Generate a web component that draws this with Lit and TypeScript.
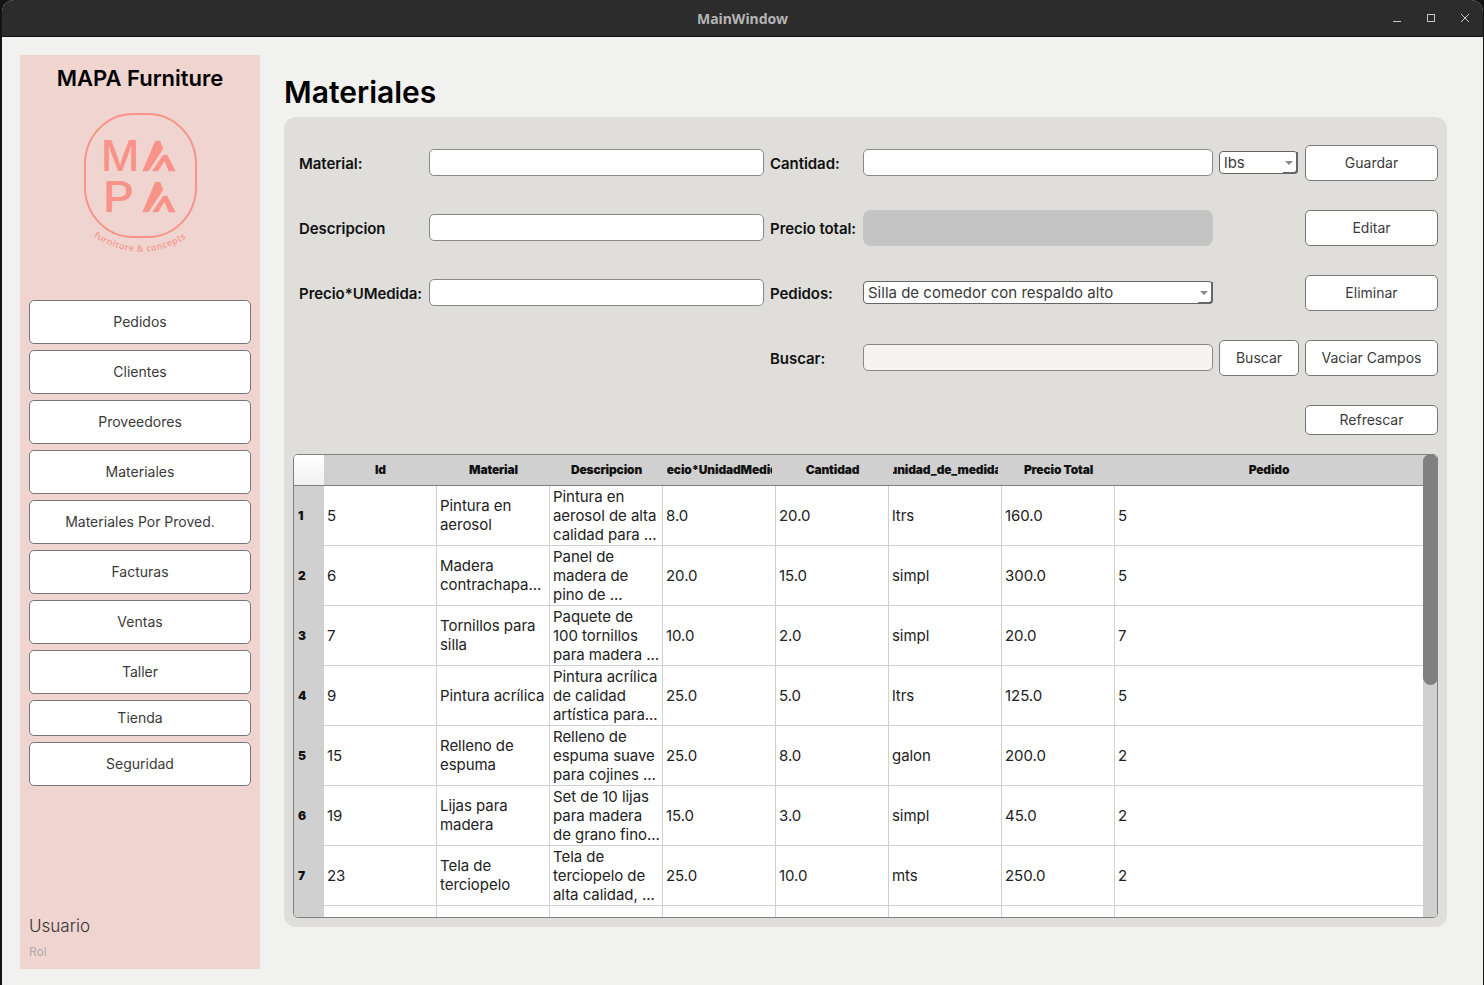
import { LitElement, html, css, svg } from 'lit';
import { customElement } from 'lit/decorators.js';

const NAV = [
  'Pedidos', 'Clientes', 'Proveedores', 'Materiales', 'Materiales Por Proved.',
  'Facturas', 'Ventas', 'Taller', 'Tienda', 'Seguridad',
];

const COLUMNS = [
  'Id', 'Material', 'Descripcion', 'Precio*UnidadMedida', 'Cantidad',
  'unidad_de_medida', 'Precio Total', 'Pedido',
];

// \n marks where the reference table wraps a cell
const ROWS = [
  ['5', 'Pintura en\naerosol', 'Pintura en\naerosol de alta\ncalidad para ...', '8.0', '20.0', 'ltrs', '160.0', '5'],
  ['6', 'Madera\ncontrachapa...', 'Panel de\nmadera de\npino de ...', '20.0', '15.0', 'simpl', '300.0', '5'],
  ['7', 'Tornillos para\nsilla', 'Paquete de\n100 tornillos\npara madera ...', '10.0', '2.0', 'simpl', '20.0', '7'],
  ['9', 'Pintura acrílica', 'Pintura acrílica\nde calidad\nartística para...', '25.0', '5.0', 'ltrs', '125.0', '5'],
  ['15', 'Relleno de\nespuma', 'Relleno de\nespuma suave\npara cojines ...', '25.0', '8.0', 'galon', '200.0', '2'],
  ['19', 'Lijas para\nmadera', 'Set de 10 lijas\npara madera\nde grano fino...', '15.0', '3.0', 'simpl', '45.0', '2'],
  ['23', 'Tela de\nterciopelo', 'Tela de\nterciopelo de\nalta calidad, ...', '25.0', '10.0', 'mts', '250.0', '2'],
  ['', '', '', '', '', '', '', ''],
];

const peak = svg`
  <polygon points="62.3,61.3 68.5,61.3 83.3,38.7 80,30.7 75.3,30.7"></polygon>
  <polygon points="72,61.3 78,61.3 84.5,51 88.7,61.3 95.7,61.3 87,44.5 83,45"></polygon>
`;

const logo = svg`
  <rect x="5" y="4" width="111" height="123" rx="48" ry="50" fill="none" stroke="#f9938a" stroke-width="2"></rect>
  <text x="21" y="61.3" class="mark">M</text>
  <text transform="translate(22.5 102.3) scale(1.18 1)" class="mark">P</text>
  <g fill="#f9938a">
    ${peak}
    <g transform="translate(0 41)">${peak}</g>
  </g>
  <path id="arc" d="M14 127 Q60 156 106 128" fill="none"></path>
  <text class="tag"><textPath href="#arc" startOffset="50%" text-anchor="middle">furniture &amp; concepts</textPath></text>
`;

@customElement('app-root')
export class AppRoot extends LitElement {
  static styles = css`
    :host {
      display: block;
      height: 985px;
      overflow: hidden;
      background: #141414;
      font-family: Inter, 'Liberation Sans', sans-serif;
      color: #111;
    }
    .window {
      height: 985px;
      margin: 0 1px 0 2px;
      display: flex;
      flex-direction: column;
      background: #f1f1ef;
      border-radius: 12px 12px 0 0;
      overflow: hidden;
    }
    .titlebar {
      height: 37px;
      flex: none;
      display: flex;
      align-items: center;
      justify-content: center;
      position: relative;
      background: #2c2c2c;
      border-bottom: 1px solid #111;
      box-sizing: border-box;
      color: #b4b4b4;
      font: 700 14px 'Noto Sans', sans-serif;
    }
    .controls {
      position: absolute;
      right: 13px;
      top: 13px;
      display: flex;
      gap: 24px;
    }
    .controls svg {
      display: block;
      width: 10px;
      height: 10px;
      fill: none;
      stroke: #c8c8c8;
      stroke-width: 1;
    }
    .content {
      flex: 1;
      display: flex;
      padding: 18px 36px 16px 18px;
      gap: 24px;
    }

    /* sidebar */
    .sidebar {
      width: 240px;
      flex: none;
      display: flex;
      flex-direction: column;
      background: #f0d4d0;
      box-sizing: border-box;
      padding: 10px 9px 9px;
    }
    .brand {
      text-align: center;
      font-size: 22px;
      font-weight: 600;
      line-height: 27px;
      color: #000;
    }
    .logo {
      display: block;
      width: 120px;
      height: 150px;
      margin: 18px auto 40px;
      overflow: visible;
    }
    .mark {
      font: 500 42px Inter, sans-serif;
      fill: #f9938a;
    }
    .tag {
      font: 600 9px 'Open Sans', sans-serif;
      letter-spacing: 0.45px;
      fill: #f49a91;
    }
    nav {
      display: flex;
      flex-direction: column;
      gap: 6px;
    }
    .btn {
      display: flex;
      align-items: center;
      justify-content: center;
      box-sizing: border-box;
      background: #fff;
      border: 1px solid #777;
      border-radius: 5px;
      color: #3a3a3a;
      font-size: 14px;
      white-space: nowrap;
    }
    nav .btn {
      height: 44px;
      padding-bottom: 2px;
    }
    nav .btn.short {
      height: 36px;
    }
    .user {
      margin-top: auto;
      font-size: 17px;
      font-weight: 300;
      line-height: 22px;
      color: #333;
    }
    .role {
      margin-top: 7px;
      margin-bottom: 1px;
      font-size: 12px;
      line-height: 15px;
      color: #b0aaa8;
    }

    /* main */
    main {
      flex: 1;
      min-width: 0;
      display: flex;
      flex-direction: column;
    }
    h1 {
      margin: 17px 0 5px;
      font-size: 30px;
      font-weight: 600;
      line-height: 40px;
      color: #000;
    }
    .panel {
      height: 810px;
      box-sizing: border-box;
      padding: 13px 9px 9px 9px;
      background: #dfdeda;
      border-radius: 12px;
    }
    .form {
      display: grid;
      grid-template-columns: 136px 335px 99px 350px 92px 133px;
      grid-template-rows: 65px 65px 65px 65px 60px;
      align-items: center;
      margin-bottom: 4px;
    }
    label {
      padding-top: 2px;
      font-size: 15px;
      font-weight: 600;
      letter-spacing: -0.05px;
      color: #111;
      white-space: nowrap;
    }
    label.first {
      padding-left: 6px;
    }
    label.second {
      padding-left: 6px;
    }
    input {
      display: block;
      width: 100%;
      height: 27px;
      box-sizing: border-box;
      padding: 0 4px;
      background: #fff;
      border: 1px solid #888;
      border-radius: 5px;
      outline: none;
    }
    input.search {
      background: #f5f4f2;
    }
    .total {
      height: 36px;
      background: #c4c4c4;
      border-radius: 8px;
    }
    .combo {
      position: relative;
      display: flex;
      align-items: center;
      justify-content: space-between;
      height: 23px;
      box-sizing: border-box;
      padding: 0 4px;
      background: #fff;
      border: 1px solid #666;
      border-radius: 4px;
      font-size: 15px;
      color: #3a3a3a;
      white-space: nowrap;
    }
    .combo.small {
      width: 79px;
      margin-left: 6px;
    }
    .combo::after {
      content: '';
      position: absolute;
      right: -1px;
      bottom: -1px;
      width: 15px;
      height: 22px;
      box-sizing: border-box;
      border-right: 2px solid #666;
      border-bottom: 2px solid #666;
      border-radius: 0 0 4px 0;
      clip-path: polygon(100% 0, 100% 100%, 0 100%, 0 80%, 80% 80%, 80% 0);
    }
    .combo i {
      width: 0;
      height: 0;
      border: 4px solid transparent;
      border-top: 4px solid #8a8a8a;
      border-bottom: 0;
    }
    .form .btn {
      height: 36px;
    }
    .form .btn.thin {
      height: 30px;
      padding-bottom: 2px;
    }
    .form .btn.find {
      margin: 0 0 0 6px;
      width: 80px;
    }

    /* table */
    .table-wrap {
      position: relative;
      width: 1145px;
      height: 464px;
    }
    .table {
      height: 100%;
      box-sizing: border-box;
      display: flex;
      overflow: hidden;
      background: #fff;
      border: 1px solid #808080;
      border-radius: 5px;
      font-size: 15px;
      letter-spacing: -0.05px;
      color: #222;
    }
    .grid {
      flex: none;
      display: grid;
      grid-template-columns: 30px repeat(7, 113px) 308px;
      grid-auto-rows: 60px;
      grid-template-rows: 31px;
      height: 462px;
      overflow: hidden;
    }
    .corner {
      background: linear-gradient(#fff, #f0f0f0);
      border-bottom: 1px solid #808080;
    }
    .head {
      display: flex;
      align-items: center;
      background: #d0d0d0;
      border-bottom: 1px solid #808080;
      padding: 0 4px 2px 4px;
      min-width: 0;
    }
    .head span {
      flex: 1;
      min-width: 0;
      display: flex;
      justify-content: center;
      overflow: hidden;
      font-size: 12px;
      font-weight: 900;
      letter-spacing: -0.15px;
      white-space: nowrap;
      color: #111;
    }
    .rowhead {
      display: flex;
      align-items: center;
      padding: 0 0 2px 4px;
      background: #d0d0d0;
      font-size: 12px;
      font-weight: 900;
      color: #111;
    }
    .cell {
      display: flex;
      align-items: center;
      box-sizing: border-box;
      min-width: 0;
      padding-left: 3px;
      border-right: 1px solid #d0d0d0;
      border-bottom: 1px solid #d0d0d0;
      line-height: 19px;
      white-space: pre-line;
    }
    .cell.two {
      padding-bottom: 1px;
    }
    .cell.last {
      border-right: 0;
    }
    .scrollbar {
      flex: 1;
      background: #d0d0d0;
    }
    .thumb {
      position: absolute;
      top: 0;
      right: 0;
      width: 15px;
      height: 231px;
      background: #808080;
      border-radius: 7.5px;
    }
  `;

  render() {
    return html`
      <div class="window">
        <header class="titlebar">
          MainWindow
          <div class="controls">
            <svg viewBox="0 0 10 10"><path d="M1 8.5h8"></path></svg>
            <svg viewBox="0 0 10 10"><rect x="1.5" y="1.5" width="7" height="7"></rect></svg>
            <svg viewBox="0 0 10 10"><path d="M1 1l8 8M9 1l-8 8"></path></svg>
          </div>
        </header>
        <div class="content">
          ${this.renderSidebar()}
          <main>
            <h1>Materiales</h1>
            <section class="panel">
              ${this.renderForm()}
              ${this.renderTable()}
            </section>
          </main>
        </div>
      </div>
    `;
  }

  renderSidebar() {
    return html`
      <aside class="sidebar">
        <div class="brand">MAPA Furniture</div>
        <svg class="logo" viewBox="0 0 120 150">${logo}</svg>
        <nav>
          ${NAV.map((n) => html`<div class="btn ${n === 'Tienda' ? 'short' : ''}">${n}</div>`)}
        </nav>
        <div class="user">Usuario</div>
        <div class="role">Rol</div>
      </aside>
    `;
  }

  renderForm() {
    return html`
      <div class="form">
        <label class="first">Material:</label>
        <input type="text" />
        <label class="second">Cantidad:</label>
        <input type="text" />
        <div class="combo small"><span>lbs</span><i></i></div>
        <div class="btn">Guardar</div>

        <label class="first">Descripcion</label>
        <input type="text" />
        <label class="second">Precio total:</label>
        <div class="total"></div>
        <span></span>
        <div class="btn">Editar</div>

        <label class="first">Precio*UMedida:</label>
        <input type="text" />
        <label class="second">Pedidos:</label>
        <div class="combo"><span>Silla de comedor con respaldo alto</span><i></i></div>
        <span></span>
        <div class="btn">Eliminar</div>

        <span></span>
        <span></span>
        <label class="second">Buscar:</label>
        <input class="search" type="text" />
        <div class="btn find">Buscar</div>
        <div class="btn">Vaciar Campos</div>

        <span></span><span></span><span></span><span></span><span></span>
        <div class="btn thin">Refrescar</div>
      </div>
    `;
  }

  renderTable() {
    return html`
      <div class="table-wrap">
        <div class="table">
          <div class="grid">
            <div class="corner"></div>
            ${COLUMNS.map((c) => html`<div class="head"><span>${c}</span></div>`)}
            ${ROWS.map((row, i) => html`
              <div class="rowhead">${row[0] ? i + 1 : ''}</div>
              ${row.map((v, j) => html`<div class="cell ${j === row.length - 1 ? 'last' : ''} ${v.split('\n').length === 2 ? 'two' : ''}">${v}</div>`)}
            `)}
          </div>
          <div class="scrollbar"></div>
        </div>
        <div class="thumb"></div>
      </div>
    `;
  }
}
